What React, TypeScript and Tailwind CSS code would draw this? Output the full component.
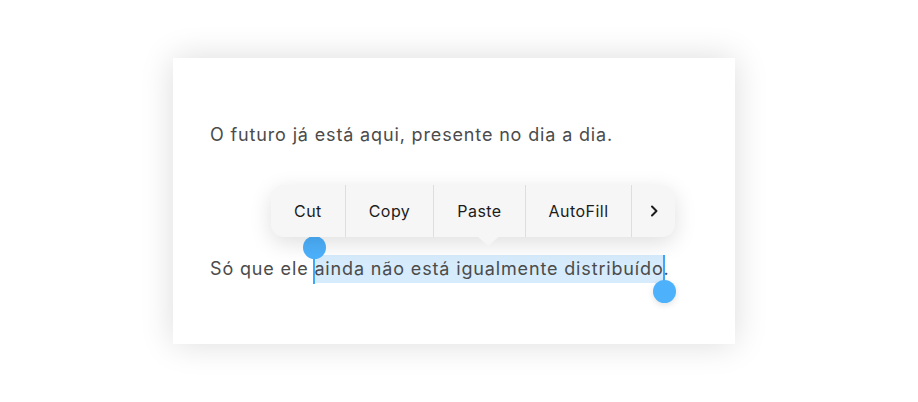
const font = { fontFamily: 'Inter, "Noto Sans", sans-serif' };

const menuItems = ["Cut", "Copy", "Paste", "AutoFill"];

function EditMenu() {
  return (
    <div className="absolute left-[98px] top-[127px] flex flex-col items-center">
      <div className="flex h-[52px] items-stretch rounded-[13px] bg-[#f6f6f6] shadow-[0_6px_22px_rgba(0,0,0,0.13)]">
        {menuItems.map((item, i) => (
          <div
            key={item}
            className={`flex items-center px-[23px] text-[16px] tracking-[0.45px] text-[#1c1c1c] ${i > 0 ? "border-l border-[#dedede]" : ""}`}
          >
            {item}
          </div>
        ))}
        <div className="flex w-[44px] items-center justify-center border-l border-[#dedede]">
          <svg width="10" height="14" viewBox="0 0 10 14" fill="none">
            <path d="M3 2.5 L7.5 7 L3 11.5" stroke="#1c1c1c" strokeWidth="2" strokeLinecap="round" strokeLinejoin="round" />
          </svg>
        </div>
      </div>
      {/* pointer under the menu */}
      <div className="ml-[30px] h-[9px] w-[20px] bg-[#f6f6f6] [clip-path:polygon(0_0,100%_0,50%_100%)]" />
    </div>
  );
}

export default function App() {
  return (
    <div className="min-h-[402px] w-[918px] bg-white pl-[173px] pt-[58px]" style={font}>
      <div className="relative h-[286px] w-[562px] bg-white pl-[37px] pt-[63px] text-[18px] leading-[28px] tracking-[0.85px] text-[#4b4b4b] shadow-[0_0_32px_rgba(0,0,0,0.14)]">
        <p>O futuro já está aqui, presente no dia a dia.</p>
        <p className="mt-[106px]">
          Só que ele{" "}
          <span className="relative inline-block bg-[#d6ecfd]">
            ainda não está igualmente distribuído
            {/* start handle */}
            <span className="absolute left-[-1px] top-[-8px] h-[37px] w-[2px] bg-[#3ea8fb]" />
            <span className="absolute left-[-11.5px] top-[-19px] h-[23px] w-[23px] rounded-full bg-[#4db1fc]" />
            {/* end handle */}
            <span className="absolute right-[-1px] top-0 h-[37px] w-[2px] bg-[#3ea8fb]" />
            <span className="absolute right-[-12.5px] top-[25px] h-[23px] w-[23px] rounded-full bg-[#4db1fc] shadow-[0_2px_6px_rgba(0,0,0,0.12)]" />
          </span>
          .
        </p>
        <EditMenu />
      </div>
    </div>
  );
}
